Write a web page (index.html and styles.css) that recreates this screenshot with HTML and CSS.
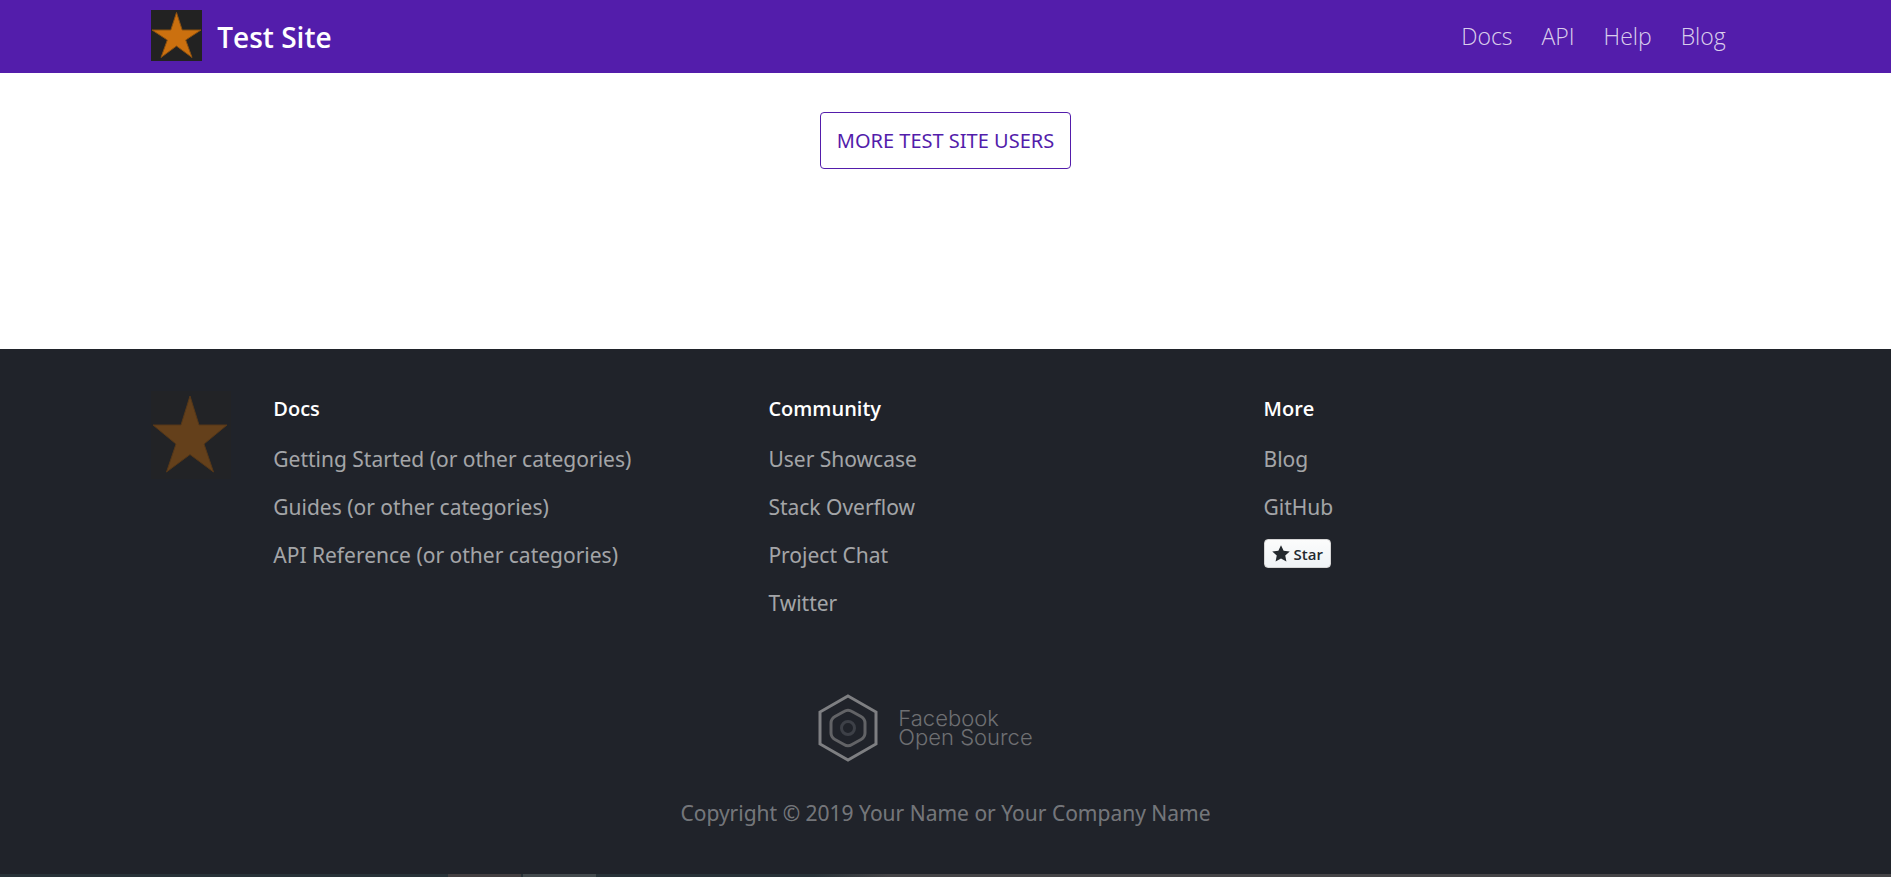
FILE: index.html
```html
<!DOCTYPE html>
<html lang="en">
<head>
<meta charset="utf-8">
<title>Test Site</title>
<link rel="stylesheet" href="styles.css">
</head>
<body>
<header class="site-header">
  <div class="header-row">
    <a class="brand" href="#">
      <svg class="brand-logo" viewBox="0 0 51 51" aria-hidden="true"><rect width="51" height="51" fill="#222"/><path d="M25.500 2.500L31.200 20H50L34.700 30L41 47.500L25.500 36L10 47.500L16.300 30L1 20H19.800Z" fill="#cb700f" stroke="#8b500f" stroke-width="1"/></svg>
      <span class="brand-name">Test Site</span>
    </a>
    <nav class="main-nav">
      <a href="#">Docs</a>
      <a href="#">API</a>
      <a href="#">Help</a>
      <a href="#">Blog</a>
    </nav>
  </div>
</header>
<main class="content">
  <a class="button" href="#">More Test Site Users</a>
</main>
<footer class="site-footer">
  <div class="sitemap">
    <a class="footer-home" href="#" aria-label="Test Site">
      <svg class="footer-logo" viewBox="0 0 80 88" aria-hidden="true"><rect width="80" height="88" fill="#222326"/><path d="M39 5L48 34H76L53 53L62.500 81L39 63.500L15.500 81L25 53L2 34H30Z" fill="#64401b" stroke="#553718" stroke-width="1"/></svg>
    </a>
    <section class="column">
      <h5>Docs</h5>
      <a href="#">Getting Started (or other categories)</a>
      <a href="#">Guides (or other categories)</a>
      <a href="#">API Reference (or other categories)</a>
    </section>
    <section class="column">
      <h5>Community</h5>
      <a href="#">User Showcase</a>
      <a href="#">Stack Overflow</a>
      <a href="#">Project Chat</a>
      <a href="#">Twitter</a>
    </section>
    <section class="column">
      <h5>More</h5>
      <a href="#">Blog</a>
      <a href="#">GitHub</a>
      <button class="star-button" type="button"><svg viewBox="0 0 14 16" aria-hidden="true"><path fill-rule="evenodd" d="M14 6l-4.900-.64L7 1 4.900 5.360 0 6l3.600 3.260L2.670 14 7 11.670 11.330 14l-.93-4.740L14 6z"/></svg>Star</button>
    </section>
  </div>
  <a class="open-source" href="#">
    <svg viewBox="0 0 60 68" aria-hidden="true"><path d="M30 2L58 18V50L30 66L2 50V18Z" fill="none" stroke="#7e7f82" stroke-width="3"/><path d="M26 17.500Q30 15 34 17.500L43 22.500Q47 25 47 29V39Q47 43 43 45.500L34 50.500Q30 53 26 50.500L17 45.500Q13 43 13 39V29Q13 25 17 22.500Z" fill="none" stroke="#626366" stroke-width="3"/><circle cx="30" cy="34" r="6.500" fill="none" stroke="#3d4047" stroke-width="3"/></svg>
    <span>Facebook<br>Open Source</span>
  </a>
  <p class="copyright">Copyright © 2019 Your Name or Your Company Name</p>
  <div class="strip"><span class="strip-warm"></span><span class="strip-cool"></span></div>
</footer>
</body>
</html>
```
FILE: styles.css
```css
* { box-sizing: border-box; }
body {
  margin: 0;
  min-height: 100vh;
  display: flex;
  flex-direction: column;
  font-family: "Noto Sans", "Open Sans", sans-serif;
  font-size: 21px;
  line-height: 28px;
  color: #222;
  background: #fff;
}
a { text-decoration: none; }
.site-header { background: #531dab; }
.header-row {
  display: flex;
  justify-content: space-between;
  align-items: center;
  padding: 10px 8% 12px;
}
.brand { display: flex; align-items: center; gap: 15px; color: #fff; }
.brand-logo { width: 51px; height: 51px; }
.brand-name { padding-top: 2px; font-family: "Open Sans", sans-serif; font-size: 28px; font-weight: 600; line-height: 36px; }
.main-nav { display: flex; gap: 1px; }
.main-nav a {
  padding: 0 14px;
  color: rgba(255, 255, 255, 0.8);
  font-family: "Open Sans", sans-serif;
  font-size: 23px;
  font-weight: 300;
}
.content { padding: 39px 0 180px; display: flex; justify-content: center; }
.button {
  border: 1px solid #531dab;
  border-radius: 4px;
  padding: 14px 16px 13px;
  color: #531dab;
  font-size: 20px;
  text-transform: uppercase;
}
.site-footer {
  flex: 1;
  display: flex;
  flex-direction: column;
  background: #20232a;
  padding-top: 42px;
}
.sitemap { display: flex; padding: 0 7% 0 8%; }
.footer-home { flex: none; width: 122px; }
.footer-logo { display: block; width: 80px; height: 88px; }
.column { flex: 1; display: flex; flex-direction: column; align-items: flex-start; gap: 16px; }
.column h5 { margin: 4px 0; font-family: "Open Sans", sans-serif; font-size: 20px; font-weight: 600; color: #fff; }
.column a { line-height: 32px; color: rgba(255, 255, 255, 0.6); }
.star-button {
  display: flex;
  align-items: center;
  gap: 4px;
  height: 29px;
  padding: 0 7px;
  border: 1px solid #d5d5d5;
  border-radius: 4px;
  background: linear-gradient(#fcfcfc, #eff3f6);
  color: #24292e;
  font: 600 15px/20px "Open Sans", sans-serif;
}
.star-button svg { width: 18px; height: 20px; fill: currentColor; }
.open-source {
  display: flex;
  align-self: center;
  align-items: center;
  gap: 20px;
  margin-top: 75px;
  padding-right: 40px;
  color: #6e6f72;
  font: 300 22px/19px Inter, sans-serif;
}
.open-source svg { width: 60px; height: 68px; }
.copyright { margin: 37px 0 0; text-align: center; color: rgba(255, 255, 255, 0.4); }
.strip { display: flex; gap: 2px; height: 3px; margin-top: auto; padding-left: 448px; background: linear-gradient(90deg, #283238 43%, #454447 47%); }
.strip-warm { width: 73px; background: #433f41; }
.strip-cool { width: 73px; background: #434a4d; }
```
